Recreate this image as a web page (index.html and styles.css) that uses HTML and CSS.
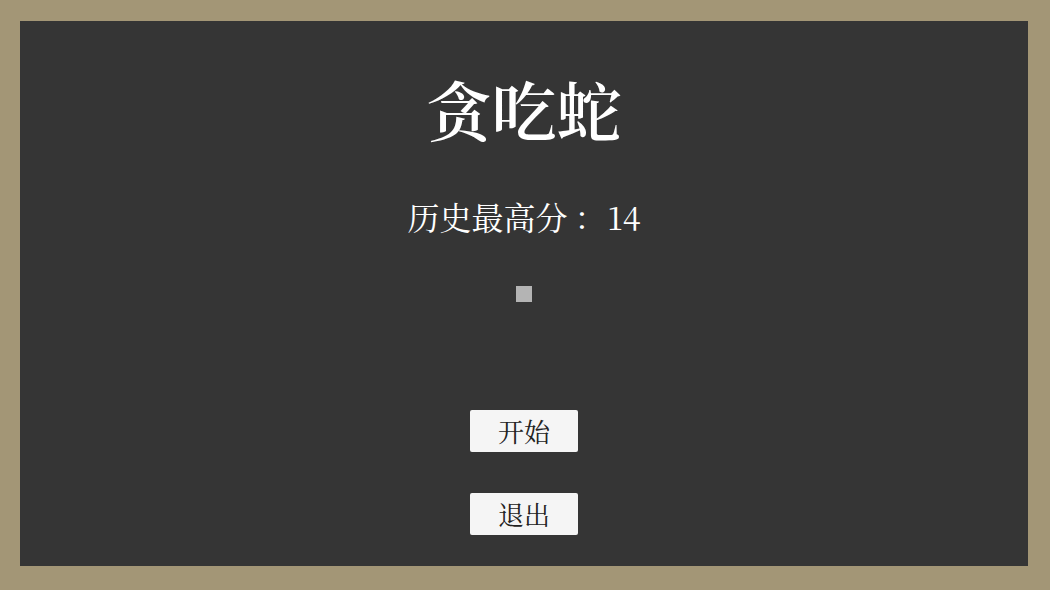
FILE: index.html
```html
<!DOCTYPE html>
<html lang="zh-CN">
<head>
<meta charset="utf-8">
<title>贪吃蛇</title>
<link rel="stylesheet" href="styles.css">
</head>
<body>
<main class="panel">
  <h1 class="title">贪吃蛇</h1>
  <p class="score">历史最高分<span class="colon">：</span>14</p>
  <div class="food"></div>
  <div class="menu">
    <button class="btn">开始</button>
    <button class="btn">退出</button>
  </div>
</main>
</body>
</html>
```
FILE: styles.css
```css
html, body {
  margin: 0;
  height: 100%;
}
body {
  background: #a39676;
  padding: 21px 22px 24px 20px;
  box-sizing: border-box;
  font-family: "Noto Serif CJK SC", "Liberation Serif", "Noto Sans CJK SC", serif;
}
.panel {
  height: 100%;
  background: #353535;
  display: flex;
  flex-direction: column;
  align-items: center;
  color: #fff;
}
.title {
  margin: 47px 0 0;
  font-size: 65px;
  line-height: 80px;
  font-weight: 600;
}
.score {
  margin: 48px 0 0;
  font-size: 32px;
  line-height: 40px;
  text-spacing-trim: space-all;
}
.colon {
  display: inline-block;
  width: 40px;
  text-align: center;
  text-indent: 6px;
}
.food {
  margin-top: 50px;
  width: 16px;
  height: 16px;
  background: #b4b4b4;
}
.menu {
  margin-top: 108px;
  display: flex;
  flex-direction: column;
  gap: 41px;
}
.btn {
  width: 108px;
  height: 42px;
  background: #f5f5f5;
  border: none;
  border-radius: 2px;
  color: #222;
  font-family: inherit;
  font-size: 26px;
  line-height: 42px;
  padding: 0;
}
```
